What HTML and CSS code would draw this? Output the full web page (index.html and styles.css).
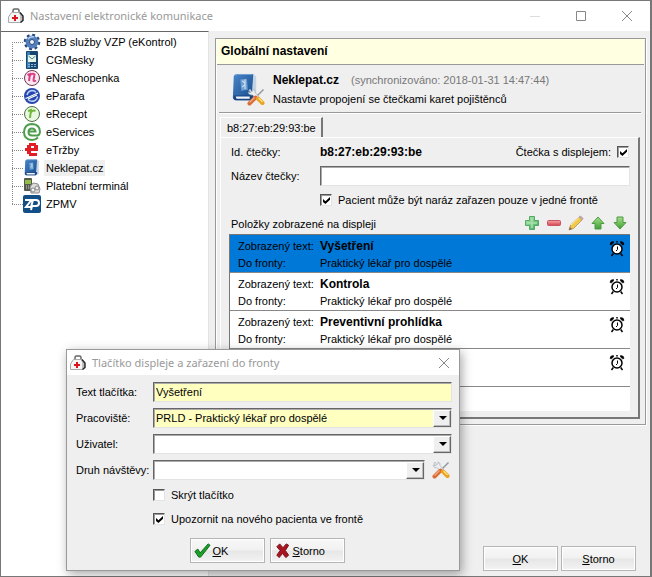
FILE: index.html
```html
<!DOCTYPE html>
<html lang="cs">
<head>
<meta charset="utf-8">
<title>Nastavení elektronické komunikace</title>
<link rel="stylesheet" href="styles.css">
</head>
<body>
<svg class="defs" aria-hidden="true">
  <defs>
    <linearGradient id="green" x1="0" y1="0" x2="0" y2="1"><stop offset="0" stop-color="#a5e08a"/><stop offset="1" stop-color="#3f9e35"/></linearGradient>
    <linearGradient id="mint" x1="0" y1="0" x2="1" y2="1"><stop offset="0" stop-color="#b5ecb5"/><stop offset="1" stop-color="#3da457"/></linearGradient>
    <linearGradient id="red" x1="0" y1="0" x2="0" y2="1"><stop offset="0" stop-color="#f7a5a8"/><stop offset="1" stop-color="#d2404b"/></linearGradient>
    <linearGradient id="blue" x1="0" y1="0" x2="1" y2="1"><stop offset="0" stop-color="#4a86c8"/><stop offset="1" stop-color="#164a8c"/></linearGradient>
    <symbol id="bag" viewBox="0 0 16 16">
      <path d="M5 5V2.500Q5 1 6.500 1h3Q11 1 11 2.500V5" fill="none" stroke="#666" stroke-width="1.500"/>
      <path d="M3.500 4.500h8l1.500 4v6H.500V9z" fill="#f5f5f5" stroke="#aaa"/>
      <path d="M12 4.500l3 3.500v4.500l-2.500 2" fill="#bbb" stroke="#222" stroke-width="1.400"/>
      <path d="M7 7v6M4 10h6" stroke="#dc1420" stroke-width="2"/>
    </symbol>
    <symbol id="close" viewBox="0 0 12 12"><path d="M1 1l10 10M11 1L1 11" stroke="#888" fill="none"/></symbol>
    <symbol id="clock" viewBox="0 0 16 17">
      <circle cx="8" cy="9" r="5" fill="#fff" stroke="#000" stroke-width="1.500"/>
      <path d="M8.500 6.500v3L7 11" fill="none" stroke="#000"/>
      <path d="M1 4.500Q1 1.500 4.500 1.500L4.500 3L2.500 4.800zM15 4.500Q15 1.500 11.500 1.500L11.500 3L13.500 4.800z" fill="#000" stroke="#000" stroke-width=".6"/>
      <path d="M8 1v1.500M4.300 13.500L2.500 16M11.700 13.500L13.500 16" stroke="#000" stroke-width="1.500"/>
    </symbol>
    <symbol id="tools" viewBox="0 0 18 18">
      <path d="M16.500 1.500L8 10" stroke="#8f979f" stroke-width="1.500"/>
      <path d="M2 2.500l1-1.500 1.500 2.500 1.500-.5V.800Q8.500 1.500 8 4.500L12 9l-2 2-4.500-4Q2 7.500 1 4l3 .7z" fill="#edf0f3" stroke="#a5adb5" stroke-width=".7"/>
      <path d="M8.500 9.500L2.500 15.500" stroke="#d96b35" stroke-width="4" stroke-linecap="round"/>
      <path d="M7.500 9.500L2.500 14.500" stroke="#f3ad78" stroke-width="1.200"/>
      <path d="M11 10.500l4.500 4.500" stroke="#e8a320" stroke-width="4" stroke-linecap="round"/>
      <path d="M11.500 10l4 4" stroke="#ffe07b" stroke-width="1.300"/>
    </symbol>
    <symbol id="book" viewBox="0 0 30 32">
      <path d="M3 3Q4 1 7 1h17v25l-3 3H5q-3 0-3-3z" fill="url(#blue)"/>
      <path d="M24 1l3 3v22l-4 3-1-3z" fill="#c3d4e4"/>
      <path d="M5 3Q5 1.500 7 1.500h16" fill="none" stroke="#75a5d8"/>
      <path d="M3 24h18l3-1v3l-2 3H5q-3-1-2-5z" fill="#1a4383"/>
      <path d="M5 25h15v2.500H6z" fill="#eef4fa"/>
      <path d="M10 7l7-1 1 12-7 1z" fill="#6c9fd2"/>
      <path d="M12 8l3 3v6M15 7v5l-3 3" fill="none" stroke="#d5e6f7" stroke-width="1.100"/>
    </symbol>
  </defs>
</svg>

<div class="window">
  <header class="titlebar">
    <svg class="app-icon"><use href="#bag"/></svg>
    <h1 class="caption">Nastavení elektronické komunikace</h1>
    <button class="caption-button" type="button" aria-label="Minimalizovat"><svg width="12" height="12"><path d="M1 6.500h10" stroke="#ddd"/></svg></button>
    <button class="caption-button" type="button" aria-label="Maximalizovat"><svg width="12" height="12"><path d="M1.500 1.500h9v9h-9z" fill="none" stroke="#888"/></svg></button>
    <button class="caption-button" type="button" aria-label="Zavřít"><svg width="12" height="12"><use href="#close"/></svg></button>
  </header>

  <div class="workspace">
    <nav class="sidebar">
      <ul class="tree">
        <li class="node"><svg viewBox="0 0 18 18"><g fill="none" stroke="#234479"><circle cx="9" cy="9" r="7" stroke-width="2.500" stroke-dasharray="2.800 2.700"/><circle cx="9" cy="9" r="4.500" stroke="#547fbc" stroke-width="4"/></g><circle cx="9" cy="9" r="2.500" fill="#eef4fa" stroke="#234479"/><path d="M5 6q2-3 6-2" stroke="#b0ceef" fill="none" stroke-width="1.500"/></svg><a href="#b2b">B2B služby VZP (eKontrol)</a></li>
        <li class="node"><svg viewBox="0 0 18 18"><rect x="3" y="0" width="12" height="18" rx="1" fill="#174670"/><rect x="4" y="1" width="3" height="16" fill="#3a80b3"/><rect x="5" y="4" width="8" height="7" fill="#e6f4e6"/><path d="M5.500 5l3.500 3 3.500-3" fill="none" stroke="#468394"/><path d="M5 13.500h8M5 15.500h8" stroke="#88b7dc" stroke-dasharray="2 1"/></svg><a href="#cgmesky">CGMesky</a></li>
        <li class="node"><svg viewBox="0 0 18 18"><circle cx="9" cy="9" r="7.500" fill="#fbe7f0" stroke="#6e3854"/><path d="M4.500 6l2.500-1-1 7M6.500 7q3-3.500 5-1.500l-1 5.500q0 2 2.500.5" fill="none" stroke="#dc3e83" stroke-width="2"/></svg><a href="#eneschopenka">eNeschopenka</a></li>
        <li class="node"><svg viewBox="0 0 18 18"><circle cx="9" cy="9" r="8" fill="#2447ae"/><path d="M4 8Q5 4 9 3.500q3 0 4 2M5 12.500q3 3 7 1 2.500-1.500 2.500-4" fill="none" stroke="#c2cff4" stroke-width="1.500"/><path d="M2.500 11.500L15 6M5 12l9-4" stroke="#fff" stroke-width="1.200"/></svg><a href="#eparafa">eParafa</a></li>
        <li class="node"><svg viewBox="0 0 18 18"><circle cx="9" cy="9" r="7.500" fill="#eaf7e1" stroke="#4c7040"/><path d="M5 6l3-1-1 8M7.500 8q2-3.500 5-2" fill="none" stroke="#70b83c" stroke-width="2"/></svg><a href="#erecept">eRecept</a></li>
        <li class="node"><svg viewBox="0 0 18 18"><path d="M15 14.500Q12.500 17 9 17 1 16.500 1 9 1.500 1 9 1q8 .5 8 8-.5 4-4 3.500H9q-3.500 0-3.500-3.500T9 5.500q3 0 3.500 3H6" fill="none" stroke="#4c9d4c" stroke-width="2"/></svg><a href="#eservices">eServices</a></li>
        <li class="node"><svg viewBox="0 0 18 18"><path d="M6 2h7v2h2v6H8v2h6v3H6v-2H4v-3H2V7h2V4h2z" fill="#e31d25"/><path d="M8 5h3v2H8z" fill="#fff"/></svg><a href="#etrzby">eTržby</a></li>
        <li class="node selected"><svg viewBox="0 0 30 32"><use href="#book"/></svg><a href="#neklepat" aria-current="page">Neklepat.cz</a></li>
        <li class="node"><svg viewBox="0 0 18 18"><rect x="1" y="1" width="8" height="13" rx="1" fill="#555b4b"/><path d="M2 3h6v4H2z" fill="#92bd4a"/><path d="M3 9h5M3 11h5" stroke="#ccc" stroke-dasharray="1 1"/><path d="M7 10l3-4 5 1 2 5-1 4H8z" fill="#ddd" stroke="#8c8c8c"/><circle cx="10" cy="13" r="2" fill="#f5f5f5" stroke="#888"/><circle cx="14" cy="11" r="2" fill="#eee" stroke="#888"/></svg><a href="#terminal">Platební terminál</a></li>
        <li class="node"><svg viewBox="0 0 18 18"><rect width="18" height="18" rx="2" fill="#124f86"/><path d="M2 5h6.500L3 12h5l2-7h3q3 0 3 3t-3 3H8M9 11l-1 4" fill="none" stroke="#fff" stroke-width="2"/></svg><a href="#zpmv">ZPMV</a></li>
      </ul>
    </nav>

    <main class="content">
      <section class="panel">
        <h2 class="panel-title">Globální nastavení</h2>
        <div class="intro">
          <svg class="intro-icon" viewBox="0 0 34 34"><use href="#book" width="28" height="32"/><use href="#tools" x="16" y="16" width="18" height="18"/></svg>
          <div class="intro-text">
            <p><strong>Neklepat.cz</strong><span class="sync">(synchronizováno: 2018-01-31 14:47:44)</span></p>
            <p>Nastavte propojení se čtečkami karet pojištěnců</p>
          </div>
        </div>
        <div class="tabs">
          <div class="tab-strip"><button class="tab" type="button">b8:27:eb:29:93:be</button></div>
          <div class="tab-page">
            <div class="reader-form">
              <span>Id. čtečky:</span>
              <div class="reader-id"><strong>b8:27:eb:29:93:be</strong>
                <label class="check-label">Čtečka s displejem: <input class="check" type="checkbox" checked></label></div>
              <label for="reader-name">Název čtečky:</label>
              <input class="field" id="reader-name" type="text">
              <label class="check-label queue-check"><input class="check" type="checkbox" checked>Pacient může být naráz zařazen pouze v jedné frontě</label>
            </div>
            <div class="list-head">
              <h3 class="list-title">Položky zobrazené na displeji</h3>
              <button class="tool" type="button" aria-label="Přidat"><svg viewBox="0 0 16 16"><path d="M5.500 1.500h5v4h4v5h-4v4h-5v-4h-4v-5h4z" fill="url(#mint)" stroke="#55a868"/><path d="M8 3v10M3 8h10" stroke="#a8e3ab" stroke-width="1.500"/></svg></button>
              <button class="tool" type="button" aria-label="Odebrat"><svg viewBox="0 0 16 16"><rect x="1.500" y="5.500" width="13" height="5" rx="1" fill="url(#red)" stroke="#c75560"/></svg></button>
              <button class="tool" type="button" aria-label="Upravit"><svg viewBox="0 0 16 16"><path d="M1 15l1.500-5L11 2l3 3-8.500 8.500z" fill="#f2c84b" stroke="#a88245" stroke-width=".7"/><path d="M3 10l8.500-8" stroke="#fff0a0"/><path d="M11 2l1.500-1 2.500 2.500L14 5z" fill="#d99b96" stroke="#aaa"/><path d="M1 15l1-3 2 2z" fill="#806650"/></svg></button>
              <button class="tool" type="button" aria-label="Nahoru"><svg viewBox="0 0 16 16"><path d="M8 2l6 6.500h-3V14H5V8.500H2z" fill="url(#green)" stroke="#4d9b42"/></svg></button>
              <button class="tool" type="button" aria-label="Dolů"><svg viewBox="0 0 16 16"><path d="M8 14l6-6.500h-3V2H5v5.500H2z" fill="url(#green)" stroke="#4d9b42"/></svg></button>
            </div>
            <ul class="items">
              <li class="item active"><span>Zobrazený text:</span><strong>Vyšetření</strong><svg class="clock"><use href="#clock"/></svg><span>Do fronty:</span><span>Praktický lékař pro dospělé</span></li>
              <li class="item"><span>Zobrazený text:</span><strong>Kontrola</strong><svg class="clock"><use href="#clock"/></svg><span>Do fronty:</span><span>Praktický lékař pro dospělé</span></li>
              <li class="item"><span>Zobrazený text:</span><strong>Preventivní prohlídka</strong><svg class="clock"><use href="#clock"/></svg><span>Do fronty:</span><span>Praktický lékař pro dospělé</span></li>
              <li class="item"><svg class="clock"><use href="#clock"/></svg></li>
            </ul>
          </div>
        </div>
      </section>
      <footer class="actions">
        <button class="button" type="button"><span><u>O</u>K</span></button>
        <button class="button" type="button"><span><u>S</u>torno</span></button>
      </footer>
    </main>
  </div>

  <form class="dialog" role="dialog" aria-labelledby="dialog-title">
    <header class="titlebar dialog-bar">
      <svg class="app-icon"><use href="#bag"/></svg>
      <h2 class="caption" id="dialog-title">Tlačítko displeje a zařazení do fronty</h2>
      <button class="caption-button" type="button" aria-label="Zavřít"><svg width="12" height="12"><use href="#close"/></svg></button>
    </header>
    <div class="dialog-form">
      <label for="button-text">Text tlačítka:</label>
      <input class="field required" id="button-text" type="text" value="Vyšetření">
      <label for="workplace">Pracoviště:</label>
      <span class="combo"><select class="field required" id="workplace"><option>PRLD - Praktický lékař pro dospělé</option></select></span>
      <label for="user">Uživatel:</label>
      <span class="combo"><select class="field" id="user"><option></option></select></span>
      <label for="visit">Druh návštěvy:</label>
      <div class="with-tool"><span class="combo"><select class="field" id="visit"><option></option></select></span><button class="tool setup" type="button" aria-label="Nastavit"><svg viewBox="0 0 18 18"><use href="#tools"/></svg></button></div>
      <label class="check-label dialog-check"><input class="check" type="checkbox">Skrýt tlačítko</label>
      <label class="check-label dialog-check"><input class="check" type="checkbox" checked>Upozornit na nového pacienta ve frontě</label>
    </div>
    <div class="dialog-actions">
      <button class="button with-icon" type="button"><svg viewBox="0 0 18 18"><path d="M1 10l3-2.500 2.500 4L15 2l2 1.500L7 16H5z" fill="#19a329" stroke="#086315"/></svg><span><u>O</u>K</span></button>
      <button class="button with-icon" type="button"><svg viewBox="0 0 18 18"><path d="M3 5l3-3 3.500 4L13 2l2.500 1.500L12 9l3.500 5-3 2.500L9 12l-3.500 4.500L3 14l3.500-5z" fill="#a91420" stroke="#720c12"/></svg><span><u>S</u>torno</span></button>
    </div>
  </form>
</div>
</body>
</html>
```
FILE: styles.css
```css
* { box-sizing: border-box; }

body {
  margin: 0;
  background: #efefef;
  color: #000;
  font: 11px/16px "Liberation Sans", Arial, sans-serif;
}

h1, h2, h3, p, ul { margin: 0; padding: 0; }
ul { list-style: none; }
button, input, select { font: inherit; color: inherit; margin: 0; }
button { padding: 0; border: 0; background: none; }
strong { font-size: 12px; }
svg { display: block; }
.defs { position: absolute; width: 0; height: 0; }

.window {
  position: relative;
  display: flex;
  flex-direction: column;
  min-height: 100vh;
  border: 1px solid #777;
  border-right-width: 2px;
}

.titlebar {
  display: flex;
  align-items: center;
  height: 30px;
  padding-left: 7px;
  background: #fff;
}
.app-icon { width: 16px; height: 16px; margin-right: 6px; }
.caption {
  flex: 1;
  color: #999;
  font: 11px/16px "Noto Sans", "Open Sans", sans-serif;
  white-space: nowrap;
}
.caption-button {
  display: flex;
  align-items: center;
  justify-content: center;
  width: 46px;
  height: 100%;
}

.workspace { display: flex; flex: 1; }

.sidebar {
  width: 208px;
  background: #fff;
  border-top: 1px solid #666;
  border-right: 1px solid #e3e3e3;
}
.tree { padding: 1px 0 0 11px; }
.node {
  display: flex;
  align-items: center;
  height: 18px;
  background:
    repeating-linear-gradient(90deg, #888 0 1px, transparent 1px 2px) 0 9px / 11px 1px no-repeat,
    repeating-linear-gradient(#888 0 1px, transparent 1px 2px) 0 0 / 1px 100% no-repeat;
}
.node:first-child {
  background:
    repeating-linear-gradient(90deg, #888 0 1px, transparent 1px 2px) 0 9px / 11px 1px no-repeat,
    repeating-linear-gradient(#888 0 1px, transparent 1px 2px) 0 9px / 1px 9px no-repeat;
}
.node:last-child {
  background:
    repeating-linear-gradient(90deg, #888 0 1px, transparent 1px 2px) 0 9px / 11px 1px no-repeat,
    repeating-linear-gradient(#888 0 1px, transparent 1px 2px) 0 0 / 1px 9px no-repeat;
}
.node svg { width: 18px; height: 18px; margin: 0 3px 0 11px; }
.node a { padding: 0 2px; color: inherit; text-decoration: none; }
.selected a { background: #efefef; }

.content {
  display: flex;
  flex: 1;
  flex-direction: column;
  min-width: 0;
  padding: 7px 4px 5px 6px;
}

.panel { border: 1px solid #999; padding: 0 1px 5px; box-shadow: inset 1px 1px #fff, 1px 1px #fff; }
.panel-title {
  padding: 4px 4px 5px;
  background: #ffffe1;
  border-bottom: 1px solid #999;
  font-size: 12px;
  line-height: 16px;
}

.intro {
  display: flex;
  margin: 0 3px 0 2px;
  padding: 7px 0 5px 12px;
  border-bottom: 1px solid #999;
  box-shadow: 0 1px #fff;
}
.intro-icon { width: 34px; height: 34px; }
.intro-text { padding-left: 8px; }
.intro-text p + p { margin-top: 3px; }
.sync { margin-left: 12px; color: #777; }

.tabs { margin: 4px 4px 0 3px; }
.tab-strip { display: flex; }
.tab {
  height: 20px;
  padding: 0 5px 0 6px;
  border: solid;
  border-width: 1px 2px 0 1px;
  border-color: #fff #777 #fff #fff;
}
.tab-page {
  padding: 6px 8px;
  border: solid;
  border-width: 1px 2px 2px 1px;
  border-color: #fff #777 #777 #fff;
}

.reader-form {
  display: grid;
  grid-template-columns: 89px 1fr;
  row-gap: 6px;
  align-items: center;
  padding-left: 2px;
}
.reader-id { display: flex; justify-content: space-between; padding-right: 1px; }
.check-label { display: flex; align-items: center; gap: 6px; }
.queue-check { grid-column: 2; }

.field {
  display: block;
  width: 100%;
  height: 20px;
  padding: 0 2px;
  border: 1px solid;
  border-color: #666 #e3e3e3 #e3e3e3 #666;
  border-radius: 0;
  outline: 0;
  background: #fff;
  box-shadow: inset 1px 1px #aaa;
  appearance: none;
}
.required { background: #ffffc0; }

.check {
  width: 12px;
  height: 12px;
  border: 1px solid;
  border-color: #555 #e3e3e3 #e3e3e3 #555;
  background: #fff;
  box-shadow: inset 1px 1px #999;
  appearance: none;
}
.check:checked::before {
  content: "";
  display: block;
  width: 7px;
  height: 7px;
  margin: 2px;
  background: #000;
  clip-path: polygon(0 30%, 35% 60%, 100% 0, 100% 40%, 35% 100%, 0 70%);
}

.list-head { display: flex; align-items: center; gap: 6px; margin-top: 6px; padding: 0 2px 2px; }
.list-title { flex: 1; font-size: 11px; font-weight: normal; padding-top: 2px; }
.tool { width: 16px; height: 16px; }
.tool svg { width: 100%; height: 100%; }

.items {
  padding-bottom: 24px;
  background: #fff;
  border-top: 1px solid #777;
  border-left: 1px solid #777;
}
.item {
  display: grid;
  grid-template-columns: 82px 1fr 16px;
  grid-template-rows: 17px 17px;
  height: 38px;
  padding: 3px 5px 0 8px;
  border-bottom: 1px solid #888;
}
.active { background: #0078d7; }
.clock { grid-column: 3; grid-row: 1 / 3; width: 16px; height: 17px; margin-top: 2px; }

.actions { display: flex; justify-content: flex-end; gap: 3px; margin-top: auto; padding-right: 10px; }
.button {
  display: flex;
  align-items: center;
  justify-content: center;
  width: 75px;
  height: 25px;
  border: 1px solid #b5b5b5;
  background: linear-gradient(#f8f8f8, #f1f1f1 48%, #e6e6e6 52%, #f3f3f3);
  box-shadow: inset 0 0 0 1px #fff;
}
.with-icon { justify-content: flex-start; padding-left: 3px; }
.with-icon svg { width: 17px; height: 17px; margin-right: 2px; }

.dialog {
  position: absolute;
  top: 348px;
  left: 65px;
  width: 394px;
  padding-bottom: 7px;
  background: #efefef;
  border: 1px solid #999;
  box-shadow: 2px 3px 10px rgba(0, 0, 0, 0.35);
}
.dialog-bar { height: 25px; padding-left: 3px; }
.dialog-bar .caption-button { width: 30px; }
.dialog-form {
  display: grid;
  grid-template-columns: 77px 1fr;
  row-gap: 6px;
  align-items: center;
  padding: 7px 7px 0 9px;
}
.combo { position: relative; display: block; flex: 1; }
.combo::before {
  content: "";
  position: absolute;
  top: 2px;
  right: 1px;
  bottom: 1px;
  width: 16px;
  background: #efefef;
  border: 1px solid;
  border-color: #fff #666 #666 #fff;
  box-shadow: inset -1px -1px #bbb;
  pointer-events: none;
}
.combo::after {
  content: "";
  position: absolute;
  top: 8px;
  right: 5px;
  border: solid transparent;
  border-width: 4px 4px 0;
  border-top-color: #000;
  pointer-events: none;
}
.with-tool { display: flex; align-items: center; gap: 7px; }
.setup { width: 18px; height: 18px; margin-right: 2px; }
.dialog-check { grid-column: 2; height: 18px; }
.dialog-actions { display: flex; justify-content: center; gap: 5px; margin-top: 10px; padding-left: 8px; }
```
